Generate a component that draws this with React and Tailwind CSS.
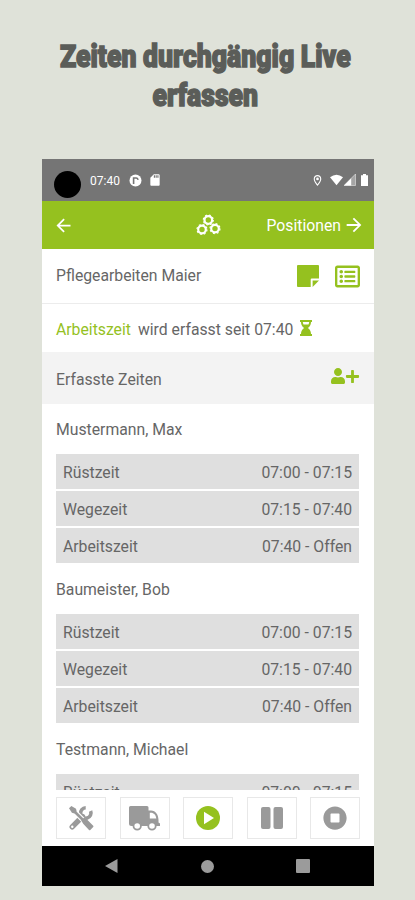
import { FaPlus, FaRegListAlt, FaStopCircle, FaUser } from "react-icons/fa";
import { MdArrowBack, MdArrowForward, MdOutlineLocationOn, MdSdCard } from "react-icons/md";

const TIMES = [
  { label: "Rüstzeit", range: "07:00 - 07:15" },
  { label: "Wegezeit", range: "07:15 - 07:40" },
  { label: "Arbeitszeit", range: "07:40 - Offen" },
];

const PEOPLE = ["Mustermann, Max", "Baumeister, Bob", "Testmann, Michael"];

function Gear({ x, y }) {
  return (
    <g transform={`translate(${x} ${y})`} fill="none" stroke="currentColor">
      <circle r="3.8" strokeWidth="2.2" />
      <circle r="5" strokeWidth="1.2" strokeDasharray="1.9 2.03" />
    </g>
  );
}

function Gears() {
  return (
    <svg className="h-[22px] w-[26px]" viewBox="0 0 26 22">
      <Gear x={12.3} y={6} />
      <Gear x={6} y={15.5} />
      <Gear x={19} y={14.6} />
    </svg>
  );
}

function NoteIcon() {
  return (
    <svg className="size-[22px]" viewBox="0 0 22 22" fill="currentColor">
      <path d="M1 0h20a1 1 0 0 1 1 1v12.6h-7.3a1 1 0 0 0-1 1V22H1a1 1 0 0 1-1-1V1a1 1 0 0 1 1-1Z" />
      <path d="M15.6 15.4H22L15.6 22Z" />
    </svg>
  );
}

function HourglassIcon() {
  return (
    <svg className="h-[16px] w-[12px]" viewBox="0 0 12 16">
      <path
        fill="currentColor"
        fillRule="evenodd"
        d="M0 0h12v2h-1c0 2.800-1.200 4.700-3.200 6 2 1.300 3.200 3.200 3.200 6h1v2H0v-2h1c0-2.800 1.200-4.700 3.200-6C2.200 6.700 1 4.800 1 2H0ZM2.800 2c.1 1 .3 1.800.7 2.500h5c.4-.7.6-1.500.7-2.500Z"
      />
    </svg>
  );
}

function ToolsIcon() {
  return (
    <svg className="size-[26px]" viewBox="0 0 26 26">
      {/* wrench */}
      <path
        d="M14.500 11.500 4.200 21.800"
        stroke="currentColor"
        strokeWidth="5.400"
        strokeLinecap="round"
      />
      <path
        d="M22.600 4.800a5.200 5.200 0 1 1-4.900-3.200"
        transform="translate(0 1.200)"
        fill="none"
        stroke="currentColor"
        strokeWidth="3.600"
      />
      <circle cx="4.300" cy="21.800" r="1.200" fill="#fff" />
      {/* screwdriver */}
      <path
        d="m5.800 5.800 13 13"
        stroke="#fff"
        strokeWidth="5"
      />
      <path d="m5.500 5.500 13 13" stroke="currentColor" strokeWidth="2.600" />
      <path
        fill="currentColor"
        d="M1 3.200 3.400.900 8 3.700 8.600 6.300 6.500 8.400 3.900 7.800Z"
      />
      <path
        fill="currentColor"
        d="M13.200 15.400 16.200 12.600 19 14.500 25.200 20.800Q25.800 21.400 25.200 22L22.300 25Q21.700 25.600 21 25L15.200 18.800Z"
      />
    </svg>
  );
}

function TruckIcon() {
  return (
    <svg className="h-[26px] w-[31px]" viewBox="0 0 31 26">
      <path
        fill="currentColor"
        fillRule="evenodd"
        d="M1.500 1H18a1.500 1.500 0 0 1 1.500 1.500V5.500H22c4.800 0 7.500 4.500 7.500 9.500v2.500l1.500 1V21H2.500A2.500 2.500 0 0 1 0 18.500v-16A1.500 1.500 0 0 1 1.500 1ZM20.800 7.800v5.700h6.500c-.5-3.500-2.500-5.700-5.300-5.700Z"
      />
      <g fill="#fff" stroke="currentColor" strokeWidth="1.800">
        <circle cx="8.200" cy="21" r="3.700" />
        <circle cx="23" cy="21" r="3.700" />
      </g>
    </svg>
  );
}

function StatusBar() {
  return (
    <div className="flex h-[42px] shrink-0 items-center bg-[#757575] pl-3 pr-[6px] text-white">
      <div className="mt-2 size-[27px] rounded-full bg-black" />
      <span className="ml-[9px] w-[31px] whitespace-nowrap pt-px text-[12px]">07:40</span>
      <svg className="ml-2 size-[13px]" viewBox="0 0 13 13">
        <circle cx="6.5" cy="6.5" r="6" fill="#fff" />
        <path d="M4.6 10V4h2.6a1.6 1.6 0 0 1 1.6 1.8" fill="none" stroke="#757575" strokeWidth="1.6" />
      </svg>
      <MdSdCard className="ml-[6px] size-[14px]" />
      <MdOutlineLocationOn className="ml-auto size-[13px]" />
      <svg className="ml-[6px] h-[12px] w-[13px]" viewBox="0 0 13 12">
        <path d="M0 3.2Q6.5-1.8 13 3.2L6.5 11.2Z" fill="#fff" />
      </svg>
      <svg className="ml-px h-[12px] w-[12px]" viewBox="0 0 12 12">
        <path d="M0 11.5 11.5 0v11.5Z" fill="#fff" fillOpacity=".35" />
        <path d="M0 11.5 7.2 4.3v7.2Z" fill="#fff" />
        <path d="M0 11.5 11.5 0v11.5Z" fill="none" stroke="#fff" strokeOpacity=".6" strokeWidth=".8" />
      </svg>
      <svg className="ml-[5px] h-[12px] w-[7px]" viewBox="0 0 7 12">
        <path d="M2 0h3v1.3h2V12H0V1.3h2Z" fill="#fff" />
      </svg>
    </div>
  );
}

function Person({ name }) {
  return (
    <section>
      <h2 className="flex h-[50px] items-center pt-[2px] text-[15.75px]">{name}</h2>
      <ul className="space-y-[2px] pb-px">
        {TIMES.map((t) => (
          <li
            key={t.label}
            className="flex h-[35px] items-center justify-between bg-[#dfdfdf] px-[7px] pt-[2px] text-[15.75px]"
          >
            <span>{t.label}</span>
            <span>{t.range}</span>
          </li>
        ))}
      </ul>
    </section>
  );
}

function ToolButton({ children }) {
  return (
    <div className="flex h-[42px] w-[50px] items-center justify-center border border-[#e8e8e8] text-[#9a9a9a]">
      {children}
    </div>
  );
}

export default function App() {
  return (
    <div className="h-[900px] w-[415px] overflow-hidden bg-[#dfe2d9] font-['Roboto',sans-serif] text-[#666]">
      <header className="flex h-[159px] justify-center pt-[37px]">
        <h1 className="origin-center scale-x-[0.845] whitespace-nowrap pr-[4px] text-center text-[31.5px] font-black leading-[39px] text-[#5b5d59] [-webkit-text-stroke:1.5px_#5b5d59]">
          Zeiten durchgängig Live
          <br />
          erfassen
        </h1>
      </header>

      <div className="ml-[42px] flex h-[727px] w-[332px] flex-col bg-white">
        <StatusBar />

        <nav className="grid h-[48px] shrink-0 grid-cols-3 items-center bg-[#95c11f] pl-[11px] pr-[9px] text-white">
          <MdArrowBack className="size-[21px]" />
          <div className="flex justify-center">
            <Gears />
          </div>
          <div className="flex items-center justify-end gap-[2px] text-[15.75px]">
            <span className="pt-[2px]">Positionen</span>
            <MdArrowForward className="size-[22px] shrink-0" />
          </div>
        </nav>

        <div className="flex h-[55px] shrink-0 items-center border-b border-[#ececec] px-[14px] text-[15.75px]">
          <span>Pflegearbeiten Maier</span>
          <div className="ml-auto flex items-center gap-[16px] text-[#95c11f]">
            <NoteIcon />
            <FaRegListAlt className="size-[25px]" />
          </div>
        </div>

        <div className="flex h-[48px] shrink-0 items-center px-[14px] pt-[3px] text-[15.75px]">
          <span className="text-[#95c11f]">Arbeitszeit</span>
          <span className="ml-[7px]">wird erfasst seit 07:40</span>
          <div className="mb-[3px] ml-[7px] text-[#95c11f]">
            <HourglassIcon />
          </div>
        </div>

        <div className="flex h-[52px] shrink-0 items-center bg-[#f3f3f3] px-[14px] text-[15.75px]">
          <span className="pt-[3px]">Erfasste Zeiten</span>
          <div className="ml-auto flex items-center pb-[4px] text-[#95c11f]">
            <FaUser className="h-[16px] w-[14px]" />
            <FaPlus className="size-[15px]" />
          </div>
        </div>

        <main className="h-[386px] shrink-0 overflow-hidden pl-[14px] pr-[15px]">
          {PEOPLE.map((name) => (
            <Person key={name} name={name} />
          ))}
        </main>

        <div className="flex h-[56px] shrink-0 items-start justify-between px-[14px] pt-[7px]">
          <ToolButton>
            <ToolsIcon />
          </ToolButton>
          <ToolButton>
            <TruckIcon />
          </ToolButton>
          <ToolButton>
            <svg className="size-[24px] text-[#95c11f]" viewBox="0 0 24 24">
              <circle cx="12" cy="12" r="12" fill="currentColor" />
              <path d="M8 5.8v12.4L18 12Z" fill="#fff" />
            </svg>
          </ToolButton>
          <ToolButton>
            <svg className="h-[22px] w-[22px]" viewBox="0 0 22 22" fill="currentColor">
              <rect width="9.5" height="22" rx="2" />
              <rect x="12.5" width="9.5" height="22" rx="2" />
            </svg>
          </ToolButton>
          <ToolButton>
            <FaStopCircle className="size-[24px]" />
          </ToolButton>
        </div>

        <div className="flex h-[40px] shrink-0 items-center justify-between bg-black pl-[63px] pr-[64px]">
          <svg className="h-[14px] w-[13px]" viewBox="0 0 13 14">
            <path d="M0 7 12.5 0v14Z" fill="#9b9b9b" />
          </svg>
          <div className="size-[13px] rounded-full bg-[#9b9b9b]" />
          <div className="size-[14px] rounded-[1px] bg-[#9b9b9b]" />
        </div>
      </div>
    </div>
  );
}
